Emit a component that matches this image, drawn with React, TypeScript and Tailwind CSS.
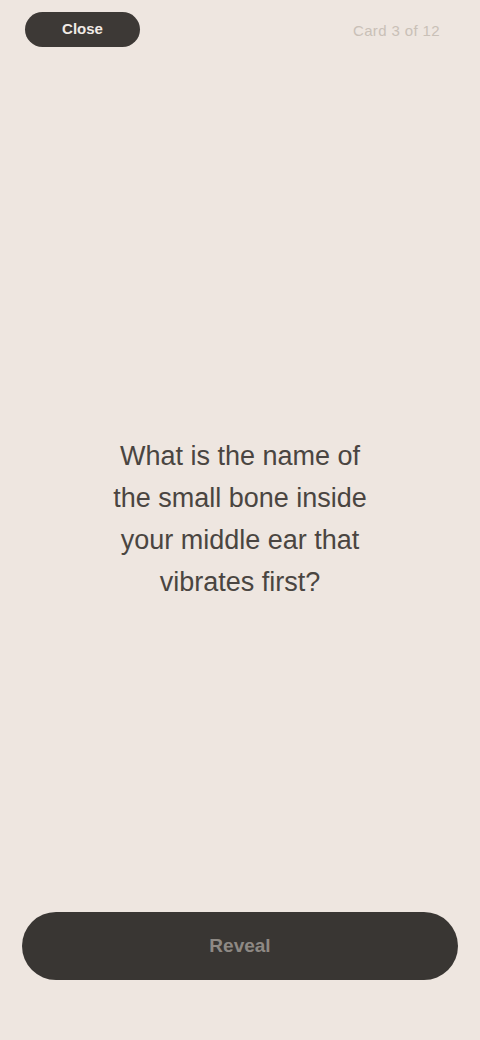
import React from 'react';

export default function App() {
  return (
    <div
      className="flex h-[1040px] w-full flex-col bg-[#eee6e0] text-[#34302d]"
      style={{ fontFamily: '"Liberation Sans", Arial, sans-serif' }}
    >
      {/* Header */}
      <header className="flex items-center justify-between px-[25px] pt-[12px]">
        <button className="flex h-[35px] w-[115px] items-center justify-center rounded-full bg-[#3d3936] text-[15px] font-semibold text-[#f1ebe6]">
          Close
        </button>
        <span className="pr-[15px] pt-[4px] text-[15px] tracking-wide text-[#c9c0b7]">
          Card 3 of 12
        </span>
      </header>

      {/* Prompt */}
      <main className="flex flex-1 items-center justify-center px-10">
        <p className="mt-[78px] max-w-[270px] text-center text-[27px] leading-[42px] font-medium text-[#4a4541]">
          What is the name of the small bone inside your middle ear that vibrates first?
        </p>
      </main>

      {/* Footer */}
      <footer className="px-[22px] pb-[60px]">
        <button className="flex h-[68px] w-full items-center justify-center rounded-full bg-[#393633] text-[19px] font-semibold text-[#8e8984]">
          Reveal
        </button>
      </footer>
    </div>
  );
}
